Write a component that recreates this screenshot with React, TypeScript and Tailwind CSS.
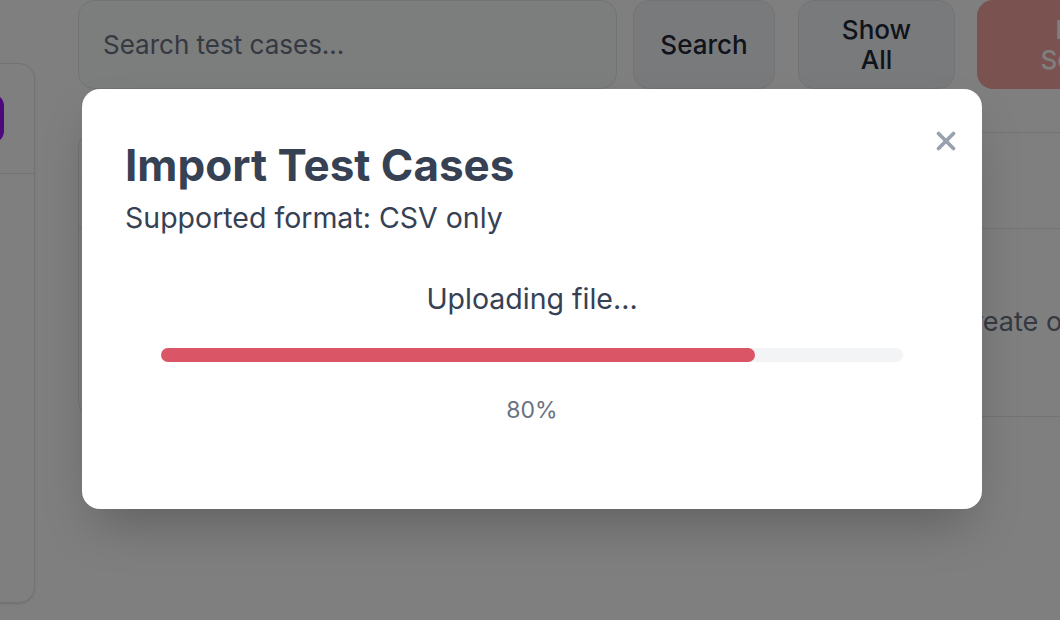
import { X } from "lucide-react";

export default function App() {
  const progress = 80;

  return (
    <div className="relative h-[620px] w-[1060px] overflow-hidden bg-white font-['Inter',sans-serif]">
      {/* page behind the dialog */}
      <div className="flex h-full">
        <aside className="-ml-[220px] mt-[63px] mb-[17px] w-[255px] shrink-0 rounded-2xl border border-gray-200 bg-white shadow-sm">
          <div className="h-[110px] border-b border-gray-200 pt-[30px] pr-[30px] pl-4">
            <div className="h-[49px] rounded-xl bg-purple-600" />
          </div>
        </aside>

        <main className="ml-[43px] w-[1160px] shrink-0">
          <div className="flex h-[89px] items-stretch">
            <input
              type="text"
              placeholder="Search test cases..."
              className="w-[539px] shrink-0 rounded-2xl border border-gray-200 bg-gray-50 px-6 text-[26px] text-gray-700 placeholder:text-gray-500 outline-none"
            />
            <button className="ml-4 w-[142px] shrink-0 rounded-2xl border border-gray-200 bg-gray-100 text-[26px] font-medium text-gray-800">
              Search
            </button>
            <button className="ml-[23px] w-[157px] shrink-0 rounded-2xl border border-gray-200 bg-gray-100 text-[26px] leading-[30px] font-medium text-gray-800">
              Show
              <br />
              All
            </button>
            <button className="ml-[22px] w-[236px] shrink-0 rounded-2xl bg-[#f4a4a0] px-10 text-[26px] leading-[30px] font-medium text-white">
              Delete Selected
            </button>
          </div>

          <div className="mt-[43px] rounded-2xl border border-gray-200 bg-white">
            <div className="h-[96px] border-b border-gray-200" />
            <div className="flex h-[187px] items-center pl-[638px] text-[27px] whitespace-nowrap text-gray-500">
              No test cases yet. Create or import test cases to get started.
            </div>
          </div>
        </main>
      </div>

      {/* overlay */}
      <div className="absolute inset-0 bg-black/50" />

      {/* dialog */}
      <div className="absolute top-[89px] left-[82px] flex h-[420px] w-[900px] flex-col rounded-[18px] bg-white px-[43px] pt-[50px] shadow-2xl">
        <button className="absolute top-[37px] right-[21px] text-gray-400">
          <X size={30} strokeWidth={3} />
        </button>

        <h2 className="text-[44px] leading-[52px] font-bold text-gray-700">Import Test Cases</h2>
        <p className="mt-[7px] text-[28.5px] leading-[40px] text-gray-700">Supported format: CSV only</p>

        <div className="mt-[41px] px-9 text-center">
          <p className="text-[28.5px] leading-[40px] text-gray-700">Uploading file...</p>
          <div className="mt-[29px] h-[14px] w-full rounded-full bg-gray-100">
            <div className="h-full rounded-full bg-[#da5566]" style={{ width: `${progress}%` }} />
          </div>
          <p className="mt-[32px] text-[23px] leading-[33px] text-gray-500">{progress}%</p>
        </div>
      </div>
    </div>
  );
}
